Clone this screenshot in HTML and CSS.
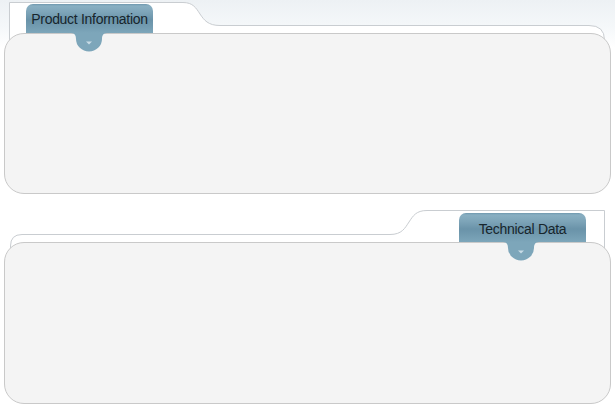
FILE: index.html
```html
<!DOCTYPE html>
<html>
<head>
<meta charset="utf-8">
<link rel="stylesheet" href="styles.css">
</head>
<body>
<div class="page">
  <section class="panel">
    <div class="head head-top">
      <svg class="folder" width="607" height="45" viewBox="0 0 607 45">
        <path d="M5.5 45 V2.5 H179 C189 2.5 192 8 196 14 C200 20 204 25.5 216 25.5 H585 Q600.5 25.5 600.5 40 V45" fill="#fff" stroke="#c9cdd1" stroke-width="1"/>
      </svg>
      <div class="tab tab-left">
        <span>Product Information</span>
        <svg class="bump" width="36" height="19" viewBox="0 0 36 19">
          <path d="M0 0 H36 C32 0 31 3 31 6 A13 12.5 0 0 1 5 6 C5 3 4 0 0 0 Z" fill="#7da6ba"/>
          <path d="M15 8.5 H21 L18 11.5 Z" fill="#c9dce6"/>
        </svg>
      </div>
    </div>
    <div class="box box-top"></div>
  </section>
  <section class="panel">
    <div class="head head-bottom">
      <svg class="folder" width="607" height="60" viewBox="0 0 607 60">
        <path d="M6.5 60 V52 Q6.5 40.5 18 40.5 H386 C398 40.5 401 34 405 28 C409 22 412 16.5 423 16.5 H600.5 V60" fill="#fff" stroke="#c9cdd1" stroke-width="1"/>
      </svg>
      <div class="tab tab-right">
        <span>Technical Data</span>
        <svg class="bump" width="36" height="19" viewBox="0 0 36 19">
          <path d="M0 0 H36 C32 0 31 3 31 6 A13 12.5 0 0 1 5 6 C5 3 4 0 0 0 Z" fill="#7da6ba"/>
          <path d="M15 8.5 H21 L18 11.5 Z" fill="#c9dce6"/>
        </svg>
      </div>
    </div>
    <div class="box box-bottom"></div>
  </section>
</div>
</body>
</html>
```
FILE: styles.css
```css
html, body {
  margin: 0;
  padding: 0;
}
body {
  width: 615px;
  height: 408px;
  overflow: hidden;
  background: linear-gradient(#edf1f4 0px, #f5f8fa 28px, #ffffff 48px);
  font-family: "Liberation Sans", Arial, sans-serif;
}
.page {
  padding: 0 4px 4px;
  width: 607px;
}
.panel {
  display: flex;
  flex-direction: column;
}
.head {
  display: grid;
  grid-template-columns: 607px;
}
.head > * {
  grid-area: 1 / 1;
}
.head-top {
  height: 33px;
  grid-template-rows: 33px;
}
.head-bottom {
  height: 48px;
  grid-template-rows: 48px;
}
.folder {
  display: block;
  align-self: start;
}
.tab {
  position: relative;
  z-index: 2;
  align-self: end;
  width: 127px;
  height: 29px;
  box-sizing: border-box;
  border-radius: 7px 7px 0 0;
  background: linear-gradient(#6f98ae 0px, #89afc2 2px, #7ea5b9 8px, #6a93a9 16px, #729bb0 22px, #7da6ba 29px);
  color: #17252c;
  font-size: 14px;
  letter-spacing: -0.3px;
  text-align: center;
  line-height: 29px;
  white-space: nowrap;
}
.tab-left {
  justify-self: start;
  margin-left: 22px;
  line-height: 30px;
}
.tab-right {
  justify-self: end;
  margin-right: 25px;
  line-height: 32px;
}
.bump {
  position: absolute;
  display: block;
  top: 29px;
  left: 45px;
}
.tab-right .bump {
  left: 44px;
}
.box {
  position: relative;
  z-index: 1;
  box-sizing: border-box;
  background: #f4f4f4;
  border: 1px solid #c9c9c9;
  border-radius: 20px;
}
.box-top {
  height: 161px;
}
.box-bottom {
  height: 162px;
}
```
